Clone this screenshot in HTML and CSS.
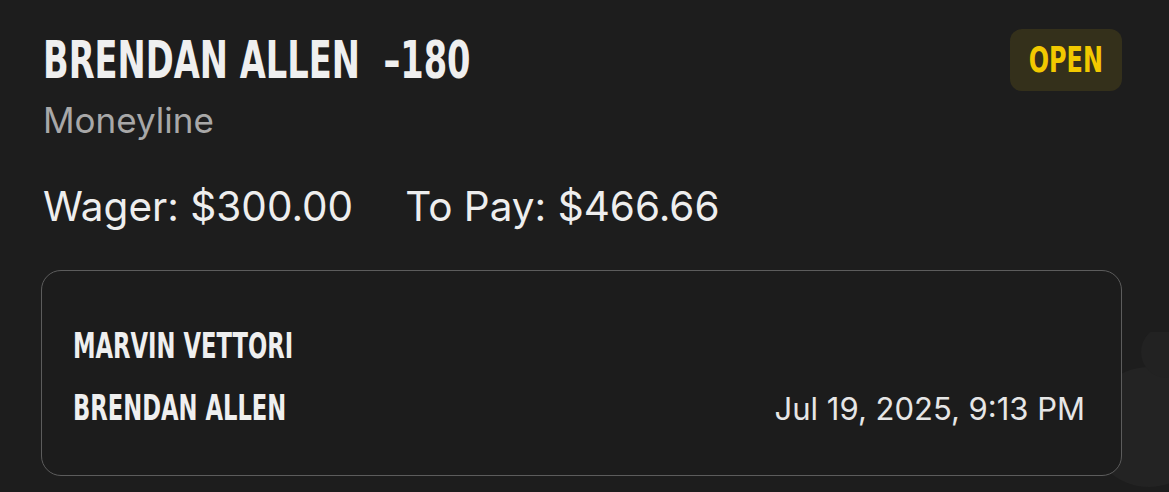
FILE: index.html
```html
<!DOCTYPE html>
<html lang="en">
<head>
    <meta charset="UTF-8">
    <title>Bet Slip</title>
    <link rel="stylesheet" href="styles.css">
</head>
<body>
    <div class="bet">
        <div class="head">
            <div>
                <h1 class="pick"><span class="cond">BRENDAN ALLEN&nbsp;&nbsp;–180</span></h1>
                <div class="market">Moneyline</div>
            </div>
            <div class="status"><span class="cond">OPEN</span></div>
        </div>

        <div class="amounts">
            <span>Wager: $300.00</span>
            <span>To Pay: $466.66</span>
        </div>

        <div class="event">
            <div class="fighter"><span class="cond">MARVIN VETTORI</span></div>
            <div class="row">
                <div class="fighter"><span class="cond">BRENDAN ALLEN</span></div>
                <div class="date">Jul 19, 2025, 9:13 PM</div>
            </div>
        </div>
    </div>

    <svg class="mark" width="120" height="160" viewBox="0 0 120 160">
        <circle cx="100" cy="95" r="60" fill="#232323"/>
        <circle cx="118" cy="20" r="26" fill="#222222"/>
    </svg>
</body>
</html>
```

FILE: styles.css
```css
body { margin: 0; background: #1d1d1d; color: #eee; font-family: Inter, "Noto Sans", sans-serif; overflow: hidden; position: relative; height: 492px; }
.bet { padding: 30px 47px 0 41px; position: relative; z-index: 1; }
.cond { display: inline-block; font-family: "DejaVu Sans", sans-serif; font-stretch: condensed; font-weight: 700; transform: scaleX(0.72); transform-origin: left center; white-space: nowrap; }
.head { display: flex; justify-content: space-between; align-items: flex-start; }
.pick { margin: 0; font-size: 52px; line-height: 60px; color: #efefef; padding-left: 2px; }
.market { font-size: 35px; color: #a8a8a8; margin-top: 9px; padding-left: 2px; }
.status { background: #34301b; border-radius: 12px; width: 112px; height: 62px; display: flex; align-items: center; justify-content: center; margin-top: -1px; }
.status .cond { color: #f2c900; font-size: 35px; transform: scaleX(0.76); transform-origin: center; }
.amounts { display: flex; gap: 52px; font-size: 40.5px; color: #eee; margin-top: 41px; padding-left: 2px; }
.event { margin-top: 39px; border: 1.5px solid #5c5c5c; border-radius: 20px; height: 206px; box-sizing: border-box; padding: 55px 36px 0 31px; background: #1c1c1c; }
.fighter .cond { font-size: 35px; color: #efefef; }
.row { display: flex; justify-content: space-between; align-items: center; margin-top: 22px; }
.date { font-size: 31px; color: #e6e6e6; }
.mark { position: absolute; right: 0; bottom: 0; }
```
